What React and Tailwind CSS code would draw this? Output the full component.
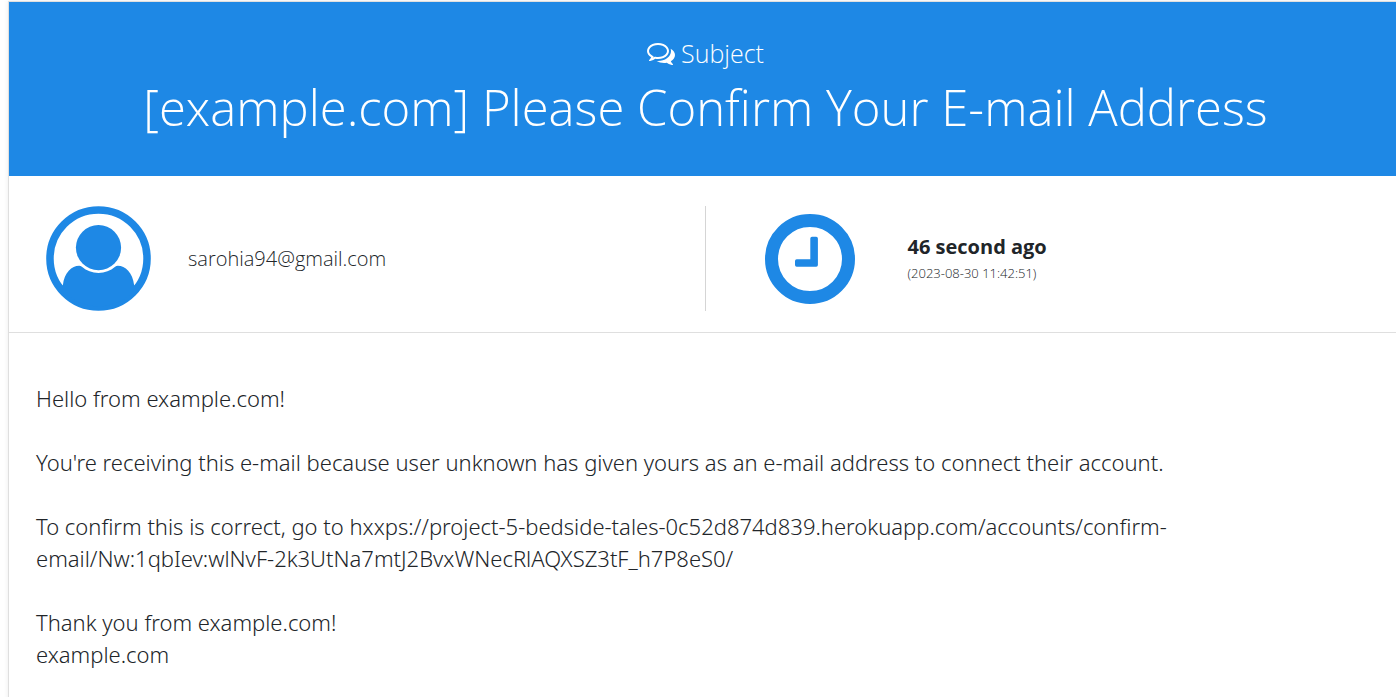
function CommentsIcon() {
  return (
    <svg viewBox="0 0 1792 1792" className="h-7 w-7 shrink-0" fill="currentColor" aria-hidden="true">
      <path d="M704 384q-153 0-286 52t-211.5 141-78.5 191q0 82 53 158t149 132l97 56-35 84q34-20 62-39l44-31 53 10q78 14 153 14 153 0 286-52t211.5-141 78.5-191-78.5-191-211.5-141-286-52zm0-128q191 0 353.5 68.5t256.5 186.5 94 257-94 257-256.5 186.5-353.5 68.5q-86 0-176-16-124 88-278 128-36 9-86 16h-3q-11 0-20.5-8t-11.5-21q-1-3-1-6.5t.5-6.5 2-6l2.5-5 3.5-5.5 4-5 4.5-5 4-4.5q5-6 23-25t26-29.5 22.5-29 25-38.5 20.5-44q-124-72-195-177t-71-224q0-139 94-257t256.5-186.5 353.5-68.5zm822 1169q10 24 20.5 44t25 38.5 22.5 29 26 29.5 23 25q1 1 4 4.5t4.5 5 4 5 3.5 5.5l2.5 5 2 6 .5 6.5-1 6.5q-3 14-13 22t-22 7q-50-7-86-16-154-40-278-128-90 16-176 16-271 0-472-132 58 4 88 4 161 0 309-45t264-129q125-92 192-212t67-254q0-77-23-152 129 71 204 178t75 230q0 120-71 224.5t-195 176.5z" />
    </svg>
  );
}

function UserIcon() {
  return (
    <svg viewBox="0 0 106 106" className="h-[105px] w-[105px] shrink-0 text-[#1e88e5]" aria-hidden="true">
      <circle cx="53" cy="53" r="49" fill="none" stroke="currentColor" strokeWidth="7.6" />
      <circle cx="53" cy="42" r="22.8" fill="currentColor" />
      <path
        fill="currentColor"
        d="M17 80C18.500 67 26 60.200 33.500 60.200Q35 60.200 36.200 61.400C41 65.500 46.500 67.600 53 67.600S65 65.500 69.800 61.400Q71 60.200 72.500 60.200C80 60.200 87.500 67 89 80L92 82A49 49 0 0 1 14 82Z"
      />
    </svg>
  );
}

function ClockIcon() {
  return (
    <svg viewBox="0 0 90 90" className="h-[90px] w-[90px] shrink-0 text-[#1e88e5]" aria-hidden="true">
      <circle cx="45" cy="45" r="38.500" fill="none" stroke="currentColor" strokeWidth="13" />
      <path
        fill="currentColor"
        d="M47 22.700h4.200q1.700 0 1.700 1.700v26.600q0 1.700-1.700 1.700h-19.500q-1.700 0-1.700-1.700v-4.100q0-1.700 1.700-1.700h13.600v-20.800q0-1.700 1.700-1.700z"
      />
    </svg>
  );
}

export default function App() {
  return (
    <div className="min-h-screen overflow-x-hidden bg-white pt-px pl-2 font-['Open_Sans','Noto_Sans',sans-serif] font-light text-[#212529]">
      <main className="-mr-1.5 min-h-screen border-t border-l border-[#dfdfdf] shadow-[0_0_5px_rgba(0,0,0,0.08)]">
        <header className="flex flex-col items-center bg-[#1e88e5] pt-[31px] pb-[34px] text-white">
          <p className="flex items-center gap-1.5 text-[25px] leading-10">
            <CommentsIcon />
            Subject
          </p>
          <h1 className="text-center text-[49px] leading-[69px]">
            [example.com] Please Confirm Your E-mail Address
          </h1>
        </header>

        <section className="grid grid-cols-2 border-b border-[#dfdfdf] pt-[30px] pb-[21px]">
          <div className="flex items-center gap-[37px] border-r border-[#d5d5d5] pl-[37px]">
            <UserIcon />
            <span className="text-xl">sarohia94@gmail.com</span>
          </div>
          <div className="flex items-center gap-[53px] pl-[59px]">
            <ClockIcon />
            <div>
              <p className="text-xl leading-7 font-bold">46 second ago</p>
              <p className="text-[13px] leading-6">(2023-08-30 11:42:51)</p>
            </div>
          </div>
        </section>

        <article className="py-[49px] pr-[200px] pl-[27px] font-['Noto_Sans','Open_Sans',sans-serif] text-[22px] leading-8">
          <p>Hello from example.com!</p>
          <p className="mt-8">
            You're receiving this e-mail because user unknown has given yours as an e-mail address to connect their
            account.
          </p>
          <p className="mt-8">
            To confirm this is correct, go to
            hxxps://project-5-bedside-tales-0c52d874d839.herokuapp.com/accounts/confirm-
            <wbr />
            email/Nw:1qbIev:wlNvF-2k3UtNa7mtJ2BvxWNecRlAQXSZ3tF_h7P8eS0/
          </p>
          <p className="mt-8">
            Thank you from example.com!
            <br />
            example.com
          </p>
        </article>
      </main>
    </div>
  );
}
